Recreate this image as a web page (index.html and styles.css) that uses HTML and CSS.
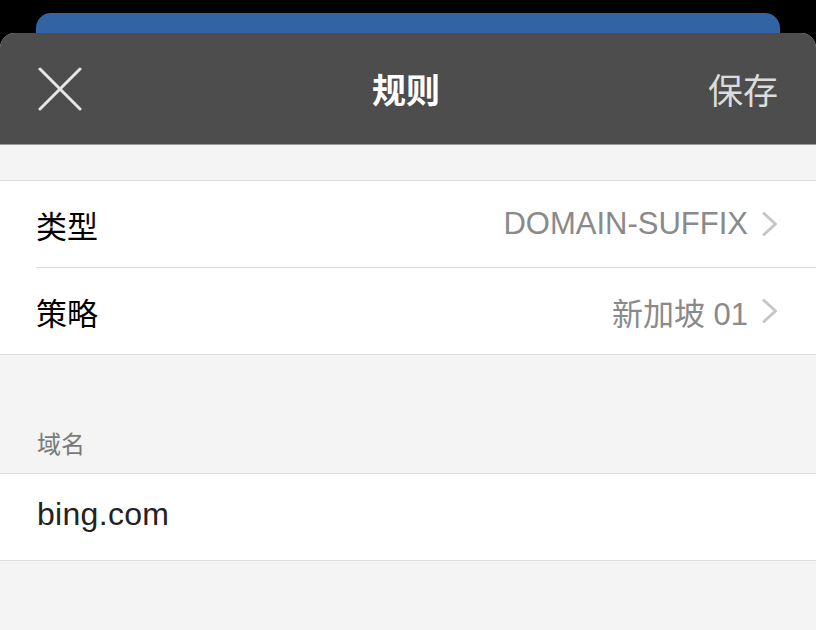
FILE: index.html
```html
<!DOCTYPE html>
<html lang="zh-CN">
<head>
<meta charset="utf-8">
<title>规则</title>
<link rel="stylesheet" href="styles.css">
</head>
<body>
<div class="screen">
  <div class="behind-card"></div>
  <div class="sheet">
    <header class="nav">
      <button class="nav-close" aria-label="关闭">
        <svg width="44" height="44" viewBox="0 0 44 44"><path d="M2 2 L42 42 M42 2 L2 42" stroke="#e6e6e6" stroke-width="3" stroke-linecap="round" fill="none"/></svg>
      </button>
      <div class="nav-title">规则</div>
      <button class="nav-save">保存</button>
    </header>
    <div class="spacer-top"></div>
    <div class="group">
      <div class="row">
        <span class="row-label">类型</span>
        <span class="row-value">DOMAIN-SUFFIX</span>
        <svg class="chev" width="16" height="24" viewBox="0 0 16 24"><path d="M2 1.5 L13.5 12 L2 22.5" stroke="#c6c6c6" stroke-width="3" fill="none" stroke-linecap="round" stroke-linejoin="round"/></svg>
      </div>
      <div class="row">
        <span class="row-label">策略</span>
        <span class="row-value">新加坡 01</span>
        <svg class="chev" width="16" height="24" viewBox="0 0 16 24"><path d="M2 1.5 L13.5 12 L2 22.5" stroke="#c6c6c6" stroke-width="3" fill="none" stroke-linecap="round" stroke-linejoin="round"/></svg>
      </div>
    </div>
    <div class="section-head">域名</div>
    <div class="group">
      <div class="row">
        <span class="row-input">bing.com</span>
      </div>
    </div>
  </div>
</div>
</body>
</html>
```
FILE: styles.css
```css
html, body {
  margin: 0;
  padding: 0;
  background: #000;
  font-family: "Liberation Sans", "Noto Sans CJK SC", sans-serif;
}
.screen {
  width: 816px;
  height: 630px;
  overflow: hidden;
  padding-top: 13px;
  box-sizing: border-box;
  display: flex;
  flex-direction: column;
}
.behind-card {
  height: 20px;
  margin: 0 36px;
  background: #3264a4;
  border-radius: 15px 15px 0 0;
  flex: none;
}
.sheet {
  flex: 1;
  background: #f4f4f4;
  border-radius: 15px 15px 0 0;
  overflow: hidden;
}
.nav {
  height: 112px;
  background: #4d4d4d;
  display: flex;
  align-items: center;
  justify-content: space-between;
  padding: 0 38px 0 38px;
  border-bottom: 1px solid #9a9a9a;
  box-sizing: border-box;
}
.nav button {
  background: none;
  border: 0;
  padding: 0;
  font-family: inherit;
  cursor: pointer;
}
.nav-close {
  width: 70px;
  height: 44px;
  display: flex;
  align-items: center;
  justify-content: flex-start;
}
.nav-close svg { display: block; }
.nav-title {
  color: #fff;
  font-size: 34px;
  font-weight: 700;
  font-family: "Noto Sans CJK SC", sans-serif;
  margin-left: -4px;
}
.nav-save {
  width: 70px;
  color: #dcdcdc;
  font-size: 35px;
  font-family: "Noto Sans CJK SC", sans-serif;
  text-align: right;
}
.spacer-top { height: 35px; }
.group {
  background: #fff;
  border-top: 1px solid #dedede;
  border-bottom: 1px solid #dedede;
}
.row {
  height: 86px;
  margin-left: 36px;
  padding-right: 38px;
  display: flex;
  align-items: center;
}
.row + .row { border-top: 1px solid #dedede; }
.row-label {
  font-family: "Noto Sans CJK SC", sans-serif;
  font-size: 31px;
  color: #000;
  flex: 1;
}
.row-value {
  font-size: 31px;
  color: #8a8a8a;
  margin-right: 14px;
}
.chev { display: block; flex: none; }
.section-head {
  height: 118px;
  box-sizing: border-box;
  padding: 0 0 13px 37px;
  display: flex;
  align-items: flex-end;
  font-size: 24px;
  color: #7a7a7a;
  font-family: "Noto Sans CJK SC", sans-serif;
}
.row-input {
  font-size: 32px;
  letter-spacing: 0.3px;
  color: #222;
  padding-left: 1px;
  margin-top: -6px;
}
```
